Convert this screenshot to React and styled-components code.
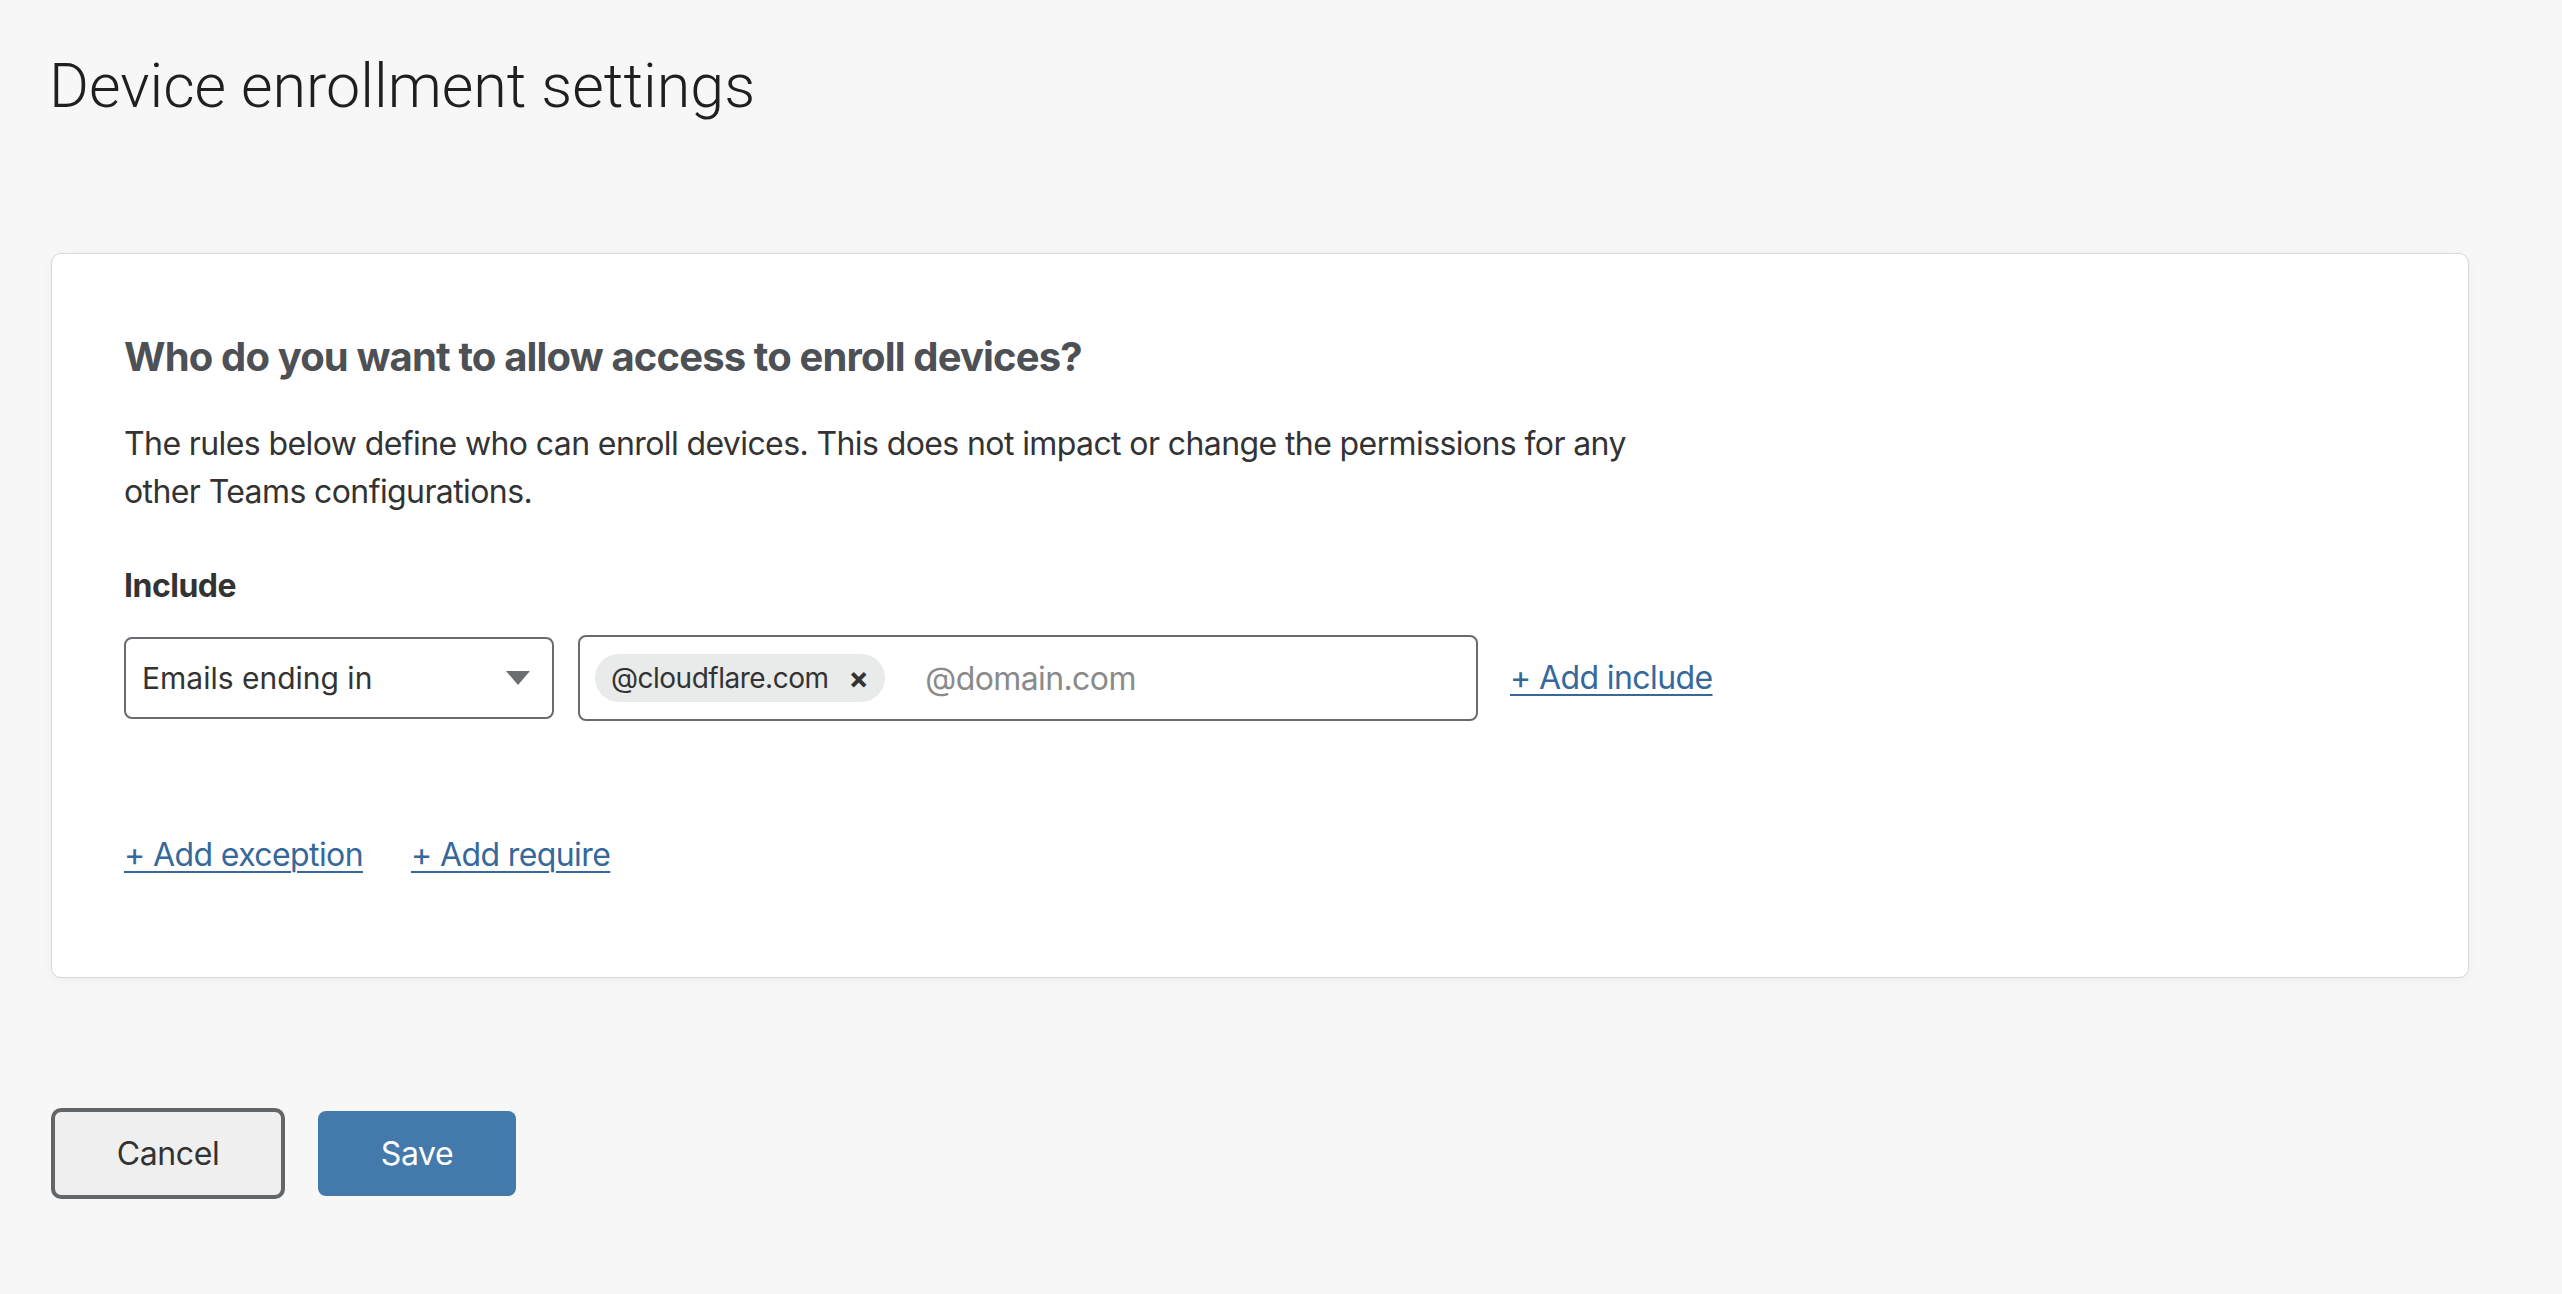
import React from 'react';
import styled, { createGlobalStyle } from 'styled-components';

const GlobalStyle = createGlobalStyle`
  html, body {
    margin: 0;
    padding: 0;
    background: #f7f7f7;
  }
  body {
    font-family: Inter, "Noto Sans", sans-serif;
    color: #333;
  }
`;

const Page = styled.div`
  padding: 50px 93px 80px 51px;
  min-height: 1294px;
  box-sizing: border-box;
`;

const Title = styled.h1`
  margin: 0 0 0 -2px;
  font-family: Roboto, Inter, sans-serif;
  font-size: 61px;
  line-height: 72px;
  font-weight: 300;
  color: #1f1f1f;
`;

const Card = styled.section`
  margin-top: 131px;
  background: #fff;
  border: 1px solid #d8d8d8;
  border-radius: 10px;
  box-shadow: 0 2px 10px rgba(0, 0, 0, 0.04);
  padding: 79px 72px 98px 72px;
`;

const Heading = styled.h2`
  margin: 0;
  font-size: 40px;
  line-height: 48px;
  font-weight: 700;
  color: #4d5054;
  letter-spacing: -0.85px;
`;

const Description = styled.p`
  margin: 39px 0 0;
  max-width: 1550px;
  font-size: 32px;
  line-height: 48px;
  letter-spacing: -0.6px;
  color: #333;
`;

const SectionLabel = styled.div`
  margin-top: 46px;
  font-size: 32px;
  line-height: 48px;
  font-weight: 700;
  letter-spacing: -0.5px;
  color: #333;
`;

const RuleRow = styled.div`
  margin-top: 25px;
  display: flex;
  align-items: center;
  gap: 24px;
`;

const Select = styled.div`
  box-sizing: border-box;
  width: 430px;
  height: 82px;
  border: 2px solid #686c70;
  border-radius: 8px;
  background: #fff;
  display: flex;
  align-items: center;
  justify-content: space-between;
  padding: 0 22px 0 16px;
  font-size: 30px;
  color: #333;
`;

const TagInput = styled.div`
  box-sizing: border-box;
  width: 900px;
  height: 86px;
  border: 2px solid #686c70;
  border-radius: 8px;
  background: #fff;
  display: flex;
  align-items: center;
  padding: 0 15px;
  gap: 40px;
`;

const Chip = styled.span`
  display: inline-flex;
  align-items: center;
  gap: 20px;
  height: 48px;
  padding: 0 17px 0 16px;
  border-radius: 24px;
  background: #e9eaea;
  font-size: 28px;
  letter-spacing: -0.5px;
  color: #333;
`;

const ChipRemove = styled.span`
  font-size: 30px;
  font-weight: 700;
  line-height: 1;
  color: #333;
`;

const Placeholder = styled.span`
  font-size: 32px;
  letter-spacing: -0.6px;
  color: #8a8a8a;
`;

const TextLink = styled.a`
  font-size: 32px;
  line-height: 48px;
  letter-spacing: -0.6px;
  color: #36689b;
  text-decoration: underline;
  text-underline-offset: 5px;
  text-decoration-thickness: 2px;
  cursor: pointer;
  margin-left: ${p => p.$offset || 0}px;
`;

const LinkRow = styled.div`
  margin-top: 110px;
  display: flex;
  gap: 48px;
`;

const Actions = styled.div`
  margin-top: 130px;
  display: flex;
  align-items: center;
  gap: 33px;
`;

const Button = styled.button`
  box-sizing: border-box;
  font-family: Inter, sans-serif;
  font-size: 32px;
  letter-spacing: -0.4px;
  cursor: pointer;
  ${p => p.$primary ? `
    width: 198px;
    height: 85px;
    border: none;
    border-radius: 8px;
    background: #4479ab;
    color: #fff;
  ` : `
    width: 234px;
    height: 91px;
    border: 4px solid #636669;
    border-radius: 10px;
    background: #efefef;
    color: #333;
  `}
`;

const Caret = () => (
  <svg width="24" height="14" viewBox="0 0 24 14">
    <path d="M0 0 H24 L12 14 Z" fill="#6b6e71" />
  </svg>
);

export default function App() {
  return (
    <>
      <GlobalStyle />
      <Page>
        <Title>Device enrollment settings</Title>
        <Card>
          <Heading>Who do you want to allow access to enroll devices?</Heading>
          <Description>
            The rules below define who can enroll devices. This does not impact or change the permissions for any other Teams configurations.
          </Description>
          <SectionLabel>Include</SectionLabel>
          <RuleRow>
            <Select>
              <span>Emails ending in</span>
              <Caret />
            </Select>
            <TagInput>
              <Chip>
                @cloudflare.com
                <ChipRemove>×</ChipRemove>
              </Chip>
              <Placeholder>@domain.com</Placeholder>
            </TagInput>
            <TextLink $offset={8}>+ Add include</TextLink>
          </RuleRow>
          <LinkRow>
            <TextLink>+ Add exception</TextLink>
            <TextLink>+ Add require</TextLink>
          </LinkRow>
        </Card>
        <Actions>
          <Button>Cancel</Button>
          <Button $primary>Save</Button>
        </Actions>
      </Page>
    </>
  );
}
